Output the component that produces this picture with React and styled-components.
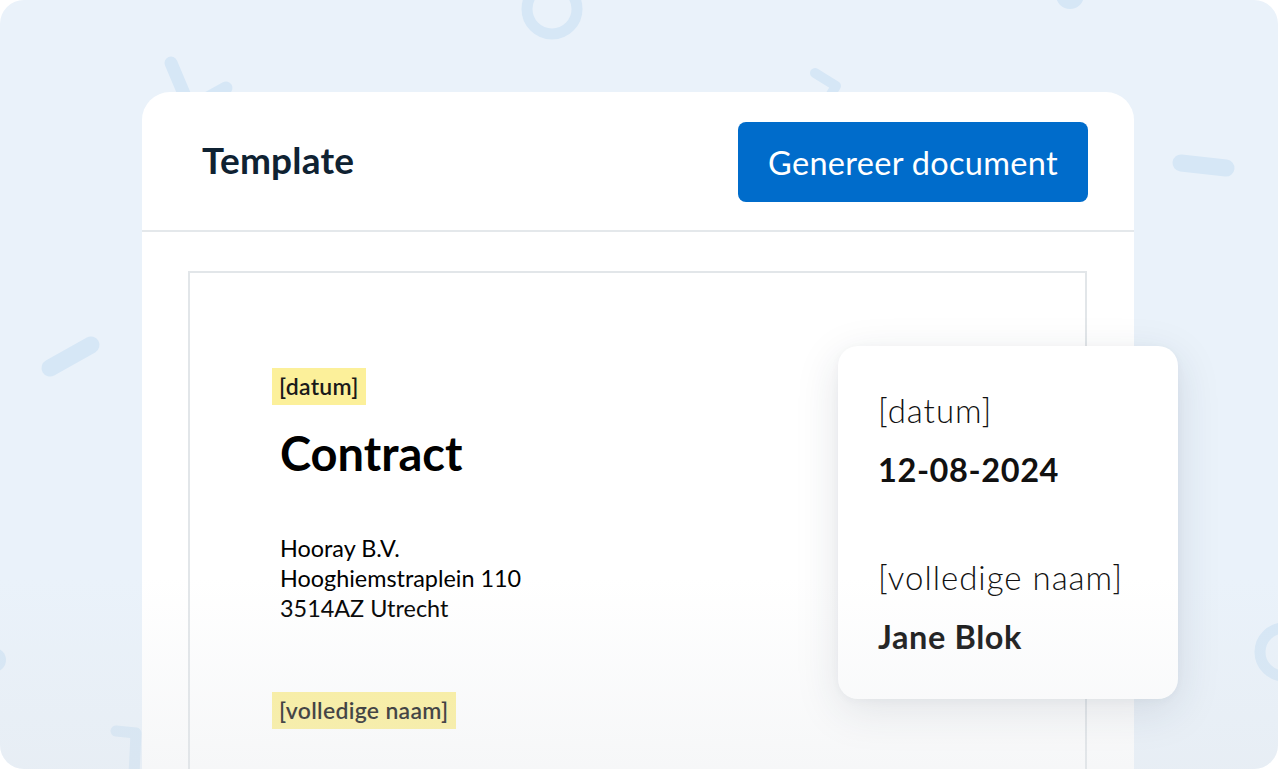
import React from "react";
import styled, { createGlobalStyle } from "styled-components";

const Global = createGlobalStyle`
  html, body { margin: 0; padding: 0; background: #ffffff; }
  body { font-family: Lato, "Noto Sans", "Liberation Sans", sans-serif; -webkit-font-smoothing: antialiased; }
  * { box-sizing: border-box; }
`;

const Stage = styled.div`
  position: relative;
  width: 1278px;
  height: 769px;
  border-radius: 24px;
  overflow: hidden;
  background: #eaf2fa;
  padding: 92px 0 0 142px;
`;

const Decor = styled.svg`
  position: absolute;
  inset: 0;
  width: 100%;
  height: 100%;
  pointer-events: none;
`;

const Fade = styled.div`
  position: absolute;
  left: 0;
  right: 0;
  bottom: 0;
  height: 190px;
  background: linear-gradient(to bottom, rgba(225, 228, 232, 0) 0%, rgba(225, 228, 232, 0.3) 100%);
  pointer-events: none;
  z-index: 5;
`;

const Card = styled.section`
  position: relative;
  z-index: 1;
  width: 992px;
  height: 720px;
  background: #ffffff;
  border-radius: 28px 28px 0 0;
  display: flex;
  flex-direction: column;
`;

const Header = styled.header`
  height: 140px;
  flex: none;
  display: flex;
  align-items: center;
  justify-content: space-between;
  padding: 2px 46px 0 60px;
  border-bottom: 2px solid #e4e8eb;
`;

const Title = styled.h1`
  margin: 0 0 5px 0;
  font-size: 37px;
  font-weight: 700;
  color: #0f2232;
  letter-spacing: 0.2px;
`;

const PrimaryButton = styled.button`
  width: 350px;
  height: 80px;
  border: none;
  border-radius: 8px;
  background: #006ccb;
  color: #ffffff;
  font-family: inherit;
  font-size: 32.5px;
  font-weight: 400;
  letter-spacing: 0.3px;
  cursor: pointer;
`;

const Body = styled.div`
  flex: 1;
  padding: 39px 47px 0 46px;
  display: flex;
`;

const Paper = styled.article`
  flex: 1;
  border: 2px solid #e2e6e9;
  border-bottom: none;
  padding: 95px 0 0 82px;
  display: flex;
  flex-direction: column;
  align-items: flex-start;
`;

const Tag = styled.span`
  display: inline-block;
  background: #fcf09a;
  color: #1a1a1a;
  font-size: 23px;
  font-weight: 600;
  line-height: 37px;
  letter-spacing: 0.3px;
  padding: 0 7px;
  margin-top: ${(p) => p.$mt || 0}px;
`;

const DocTitle = styled.h2`
  margin: 22px 0 0 8px;
  font-size: 47px;
  font-weight: 700;
  line-height: 53px;
  color: #000;
`;

const Address = styled.p`
  margin: 53px 0 0 8px;
  font-size: 23.4px;
  line-height: 30px;
  color: #000;
`;

const Popover = styled.aside`
  position: absolute;
  left: 838px;
  top: 346px;
  width: 340px;
  height: 353px;
  z-index: 3;
  background: #ffffff;
  border-radius: 20px;
  box-shadow: 0 12px 44px rgba(30, 50, 70, 0.13), 0 2px 8px rgba(30, 50, 70, 0.04);
  padding: 46px 40px 0 40px;
`;

const Field = styled.div`
  margin-top: ${(p) => (p.$first ? 0 : 71)}px;
`;

const FieldLabel = styled.div`
  font-size: 33px;
  font-weight: 300;
  line-height: 36px;
  letter-spacing: 1px;
  color: #111;
`;

const FieldValue = styled.div`
  margin-top: 24px;
  font-size: 32.5px;
  font-weight: 700;
  line-height: 36px;
  letter-spacing: 0.6px;
  color: #111;
`;

const C = "#d6e7f6";

export default function App() {
  return (
    <>
      <Global />
      <Stage>
        <Decor viewBox="0 0 1278 769">
          <circle cx="552" cy="9" r="25" fill="none" stroke={C} strokeWidth="11" />
          <circle cx="1070" cy="-5" r="14" fill={C} />
          <polyline points="171,63 190,108 226,88" fill="none" stroke={C} strokeWidth="13" strokeLinecap="round" strokeLinejoin="round" />
          <polyline points="815,73 836,86 820,112" fill="none" stroke={C} strokeWidth="10" strokeLinecap="round" strokeLinejoin="round" />
          <line x1="1181" y1="163" x2="1226" y2="168" stroke={C} strokeWidth="17" strokeLinecap="round" />
          <line x1="50" y1="368" x2="91" y2="345" stroke={C} strokeWidth="17" strokeLinecap="round" />
          <circle cx="1284" cy="652" r="24" fill="none" stroke={C} strokeWidth="11" />
          <circle cx="-6" cy="660" r="12" fill={C} />
          <polyline points="116,731 136,733 134,775" fill="none" stroke={C} strokeWidth="11" strokeLinecap="round" strokeLinejoin="round" />
        </Decor>
        <Card>
          <Header>
            <Title>Template</Title>
            <PrimaryButton>Genereer document</PrimaryButton>
          </Header>
          <Body>
            <Paper>
              <Tag>[datum]</Tag>
              <DocTitle>Contract</DocTitle>
              <Address>
                Hooray B.V.
                <br />
                Hooghiemstraplein 110
                <br />
                3514AZ Utrecht
              </Address>
              <Tag $mt={69}>[volledige naam]</Tag>
            </Paper>
          </Body>
        </Card>
        <Popover>
          <Field $first>
            <FieldLabel>[datum]</FieldLabel>
            <FieldValue>12-08-2024</FieldValue>
          </Field>
          <Field>
            <FieldLabel>[volledige naam]</FieldLabel>
            <FieldValue>Jane Blok</FieldValue>
          </Field>
        </Popover>
        <Fade />
      </Stage>
    </>
  );
}
